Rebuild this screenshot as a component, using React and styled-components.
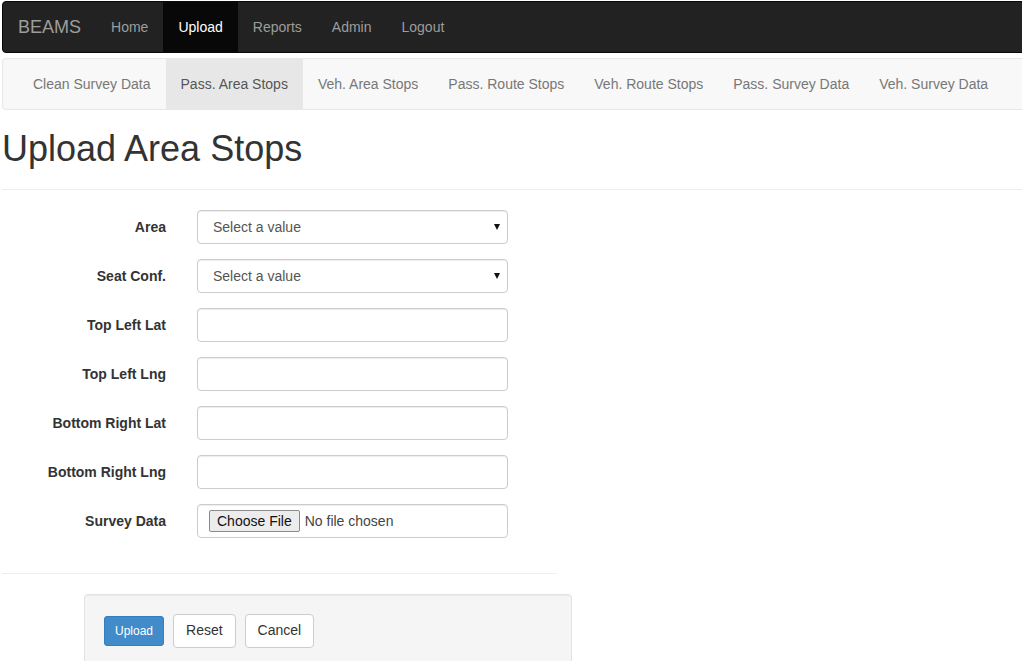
import React from "react"
import styled, { createGlobalStyle } from "styled-components"

const Global = createGlobalStyle`
  html, body {
    margin: 0;
    padding: 0;
    overflow: hidden;
    background: #fff;
  }
  body {
    font-family: "Liberation Sans", Arial, sans-serif;
    font-size: 14px;
    line-height: 1.42857;
    color: #333;
  }
  * { box-sizing: border-box; }
`

const Page = styled.div`
  width: 1060px;
  padding: 1px 0 0 2px;
`

const TopBar = styled.nav`
  display: flex;
  align-items: stretch;
  height: 52px;
  padding: 0 15px;
  background: #222;
  border: 1px solid #080808;
  border-radius: 4px;
`

const Brand = styled.span`
  display: block;
  margin-left: -15px;
  padding: 15px;
  font-size: 18px;
  line-height: 20px;
  color: #9d9d9d;
`

const NavList = styled.ul`
  display: flex;
  margin: 0;
  padding: 0;
  list-style: none;
`

const TopLink = styled.li`
  padding: 15px;
  line-height: 20px;
  color: ${p => (p.active ? "#fff" : "#9d9d9d")};
  background: ${p => (p.active ? "#080808" : "transparent")};
`

const SubBar = styled.nav`
  display: flex;
  height: 52px;
  margin-top: 5px;
  padding: 0 15px;
  background: #f8f8f8;
  border: 1px solid #e7e7e7;
  border-radius: 4px;
`

const SubLink = styled.li`
  padding: 15px;
  line-height: 20px;
  color: ${p => (p.active ? "#555" : "#777")};
  background: ${p => (p.active ? "#e7e7e7" : "transparent")};
`

const Title = styled.h1`
  margin: 19px 0 0 0;
  font-size: 36px;
  font-weight: 500;
  line-height: 1.1;
  color: #333;
`

const Rule = styled.hr`
  width: ${p => p.width || "100%"};
  margin: ${p => p.space || "20px 0"};
  border: 0;
  border-top: 1px solid #eee;
`

const Form = styled.form`
  display: grid;
  grid-template-columns: 164px 311px;
  column-gap: 31px;
  row-gap: 15px;
`

const Label = styled.label`
  padding-top: 7px;
  text-align: right;
  font-weight: 700;
  line-height: 20px;
  color: #333;
`

const Field = styled.input`
  display: block;
  width: 100%;
  height: 34px;
  padding: 6px 12px;
  font-family: inherit;
  font-size: 14px;
  line-height: 1.42857;
  color: #555;
  background: #fff;
  border: 1px solid #ccc;
  border-radius: 4px;
  box-shadow: inset 0 1px 1px rgba(0, 0, 0, 0.075);
  outline: none;

  &::file-selector-button {
    height: 22px;
    margin: -1px 5px 0 0;
    padding: 0 7px;
    font-family: inherit;
    font-size: 14px;
    color: #111;
    background: #ececec;
    border: 1px solid #8a8a8a;
    border-radius: 2px;
  }
`

const FileField = styled(Field)`
  padding: 6px 12px 6px 11px;
  color: #444;
`

const SelectWrap = styled.div`
  position: relative;
  width: 100%;

  &::after {
    content: "";
    position: absolute;
    right: 8px;
    top: 14px;
    border-left: 3px solid transparent;
    border-right: 3px solid transparent;
    border-top: 6px solid #111;
    pointer-events: none;
  }
`

const Select = styled.select`
  display: block;
  width: 100%;
  height: 34px;
  padding: 6px 12px 6px 15px;
  font-family: inherit;
  font-size: 14px;
  color: #555;
  background: #fff;
  border: 1px solid #ccc;
  border-radius: 4px;
  box-shadow: inset 0 1px 1px rgba(0, 0, 0, 0.075);
  appearance: none;
  outline: none;
`

const Well = styled.div`
  display: flex;
  align-items: center;
  gap: 9px;
  width: 488px;
  margin-left: 82px;
  padding: 19px;
  background: #f5f5f5;
  border: 1px solid #e3e3e3;
  border-radius: 4px;
  box-shadow: inset 0 1px 1px rgba(0, 0, 0, 0.05);
`

const Button = styled.button`
  height: ${p => (p.small ? "30px" : "34px")};
  padding: ${p => (p.small ? "5px 10px" : "6px 12px")};
  font-family: inherit;
  font-size: ${p => (p.small ? "12px" : "14px")};
  line-height: ${p => (p.small ? "1.5" : "1.42857")};
  color: ${p => (p.primary ? "#fff" : "#333")};
  background: ${p => (p.primary ? "#428bca" : "#fff")};
  border: 1px solid ${p => (p.primary ? "#357ebd" : "#ccc")};
  border-radius: ${p => (p.small ? "3px" : "4px")};
`

const topLinks = ["Home", "Upload", "Reports", "Admin", "Logout"]
const subLinks = [
  "Clean Survey Data",
  "Pass. Area Stops",
  "Veh. Area Stops",
  "Pass. Route Stops",
  "Veh. Route Stops",
  "Pass. Survey Data",
  "Veh. Survey Data",
]
const textFields = ["Top Left Lat", "Top Left Lng", "Bottom Right Lat", "Bottom Right Lng"]

const App = () => (
  <Page>
    <Global />
    <TopBar>
      <Brand>BEAMS</Brand>
      <NavList>
        {topLinks.map(l => (
          <TopLink key={l} active={l === "Upload"}>{l}</TopLink>
        ))}
      </NavList>
    </TopBar>
    <SubBar>
      <NavList>
        {subLinks.map(l => (
          <SubLink key={l} active={l === "Pass. Area Stops"}>{l}</SubLink>
        ))}
      </NavList>
    </SubBar>
    <Title>Upload Area Stops</Title>
    <Rule />
    <Form>
      <Label>Area</Label>
      <SelectWrap>
        <Select defaultValue="">
          <option value="">Select a value</option>
        </Select>
      </SelectWrap>
      <Label>Seat Conf.</Label>
      <SelectWrap>
        <Select defaultValue="">
          <option value="">Select a value</option>
        </Select>
      </SelectWrap>
      {textFields.map(f => (
        <React.Fragment key={f}>
          <Label>{f}</Label>
          <Field type="text" />
        </React.Fragment>
      ))}
      <Label>Survey Data</Label>
      <FileField type="file" />
    </Form>
    <Rule width="555px" space="35px 0 20px" />
    <Well>
      <Button primary small>Upload</Button>
      <Button>Reset</Button>
      <Button>Cancel</Button>
    </Well>
  </Page>
)

export default App
